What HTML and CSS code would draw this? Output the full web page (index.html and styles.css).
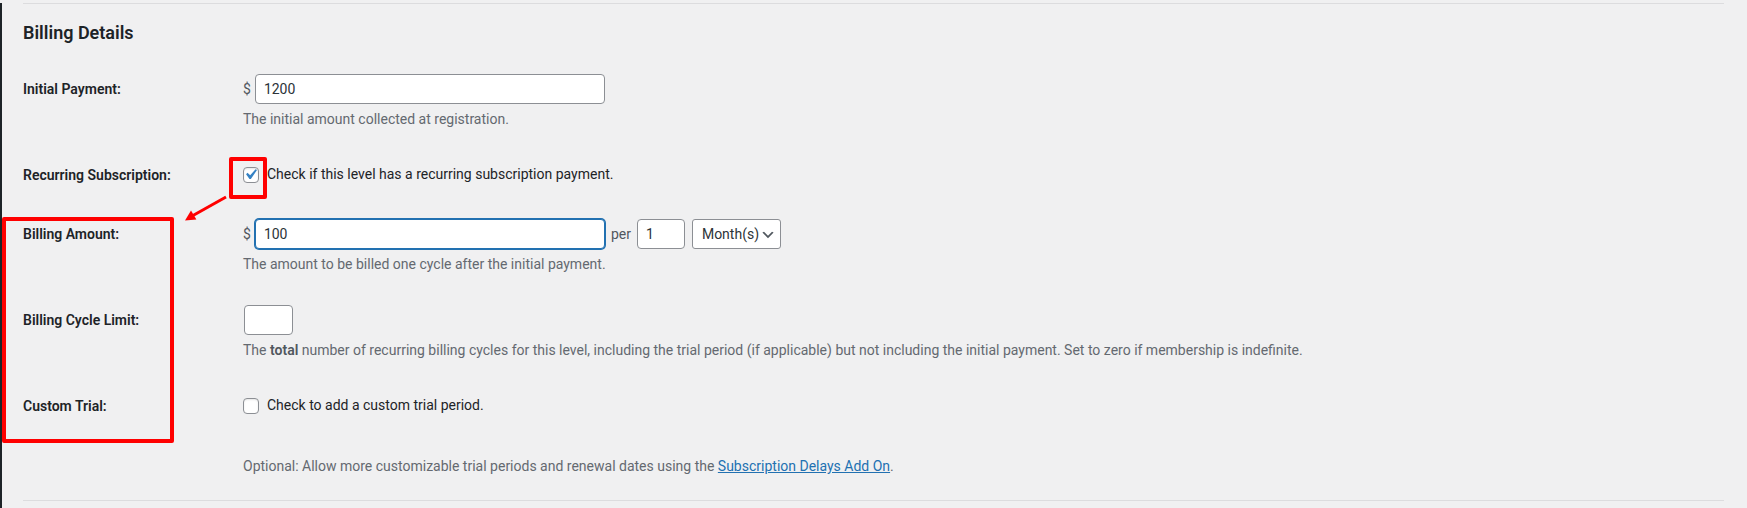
FILE: index.html
```html
<!DOCTYPE html>
<html lang="en">
<head>
    <meta charset="UTF-8">
    <meta name="viewport" content="width=device-width, initial-scale=1.0">
    <title>Edit Membership Level</title>
<link rel="stylesheet" href="styles.css">
</head>
<body>
    <div class="screen">
        <section class="billing">
            <hr class="rule">
            <h2 class="section-title">Billing Details</h2>

            <div class="form-row">
                <div class="row-label">Initial Payment:</div>
                <div class="row-field">
                    <div class="field-line">
                        <span class="currency">$</span>
                        <input type="text" class="text-input input-wide" value="1200">
                    </div>
                    <p class="description">The initial amount collected at registration.</p>
                </div>
            </div>

            <div class="form-row">
                <div class="row-label">Recurring Subscription:</div>
                <div class="row-field">
                    <label class="check-line">
                        <span class="check-box">
                            <input type="checkbox" checked>
                            <svg class="check-mark" viewBox="0 0 20 20" width="21" height="21"><path d="M14.83 4.89l1.34.94-5.81 8.38H9.02L5.78 9.67l1.34-1.25 2.57 2.4z" fill="#3582c4"/></svg>
                        </span>
                        Check if this level has a recurring subscription payment.
                    </label>
                </div>
            </div>

            <div class="form-row">
                <div class="row-label">Billing Amount:</div>
                <div class="row-field">
                    <div class="field-line">
                        <span class="currency">$</span>
                        <input type="text" class="text-input input-wide is-focused" value="100">
                        <span class="per">per</span>
                        <input type="text" class="text-input input-small" value="1">
                        <span class="select-wrap">
                            <select class="select-input">
                                <option>Day(s)</option>
                                <option>Week(s)</option>
                                <option selected>Month(s)</option>
                                <option>Year(s)</option>
                            </select>
                            <svg class="select-arrow" viewBox="0 0 20 20" width="16" height="16"><path d="M5 6l5 5 5-5 2 1-7 7-7-7 2-1z" fill="#50575e"/></svg>
                        </span>
                    </div>
                    <p class="description">The amount to be billed one cycle after the initial payment.</p>
                </div>
            </div>

            <div class="form-row">
                <div class="row-label">Billing Cycle Limit:</div>
                <div class="row-field">
                    <div class="field-line">
                        <input type="text" class="text-input input-limit" value="">
                    </div>
                    <p class="description">The <strong>total</strong> number of recurring billing cycles for this level, including the trial period (if applicable) but not including the initial payment. Set to zero if membership is indefinite.</p>
                </div>
            </div>

            <div class="form-row">
                <div class="row-label">Custom Trial:</div>
                <div class="row-field">
                    <label class="check-line">
                        <span class="check-box"><input type="checkbox"></span>
                        Check to add a custom trial period.
                    </label>
                </div>
            </div>

            <div class="form-row">
                <div class="row-label"></div>
                <div class="row-field note-field">
                    <p class="description">Optional: Allow more customizable trial periods and renewal dates using the <a href="#">Subscription Delays Add On</a>.</p>
                </div>
            </div>

            <hr class="rule rule-bottom">
        </section>
    </div>

    <!-- screenshot annotations -->
    <div class="mark mark-check"></div>
    <div class="mark mark-fields"></div>
    <svg class="mark-arrow" viewBox="180 190 50 35" width="50" height="35">
        <line x1="226" y1="197" x2="193" y2="215.5" stroke="#ff0000" stroke-width="3"/>
        <polygon points="185,220.5 196.4,219.6 191,210.6" fill="#ff0000"/>
    </svg>
</body>
</html>
```
FILE: styles.css
```css
body {
    margin: 0;
    background-color: #f0f0f1;
    color: #1d2327;
    font-family: Roboto, "Liberation Sans", sans-serif;
    font-size: 14px;
    line-height: 18px;
}

.screen {
    min-height: 508px;
    border-left: 2px solid #1d2327;
    padding: 0 23px 0 21px;
    box-sizing: border-box;
}

.rule {
    margin: 3px 0 0;
    border: none;
    border-top: 1px solid #dcdcde;
}

.rule-bottom {
    margin-top: 23px;
}

.section-title {
    font-size: 18px;
    font-weight: 600;
    line-height: 23px;
    margin: 17px 0 15px;
}

.form-row {
    display: grid;
    grid-template-columns: 220px 1fr;
}

.row-label {
    font-weight: 600;
    padding: 21px 0 20px;
}

.row-field {
    padding: 15px 0;
}

.note-field {
    padding-top: 16px;
    padding-bottom: 0;
}

.field-line {
    display: flex;
    align-items: center;
    height: 30px;
}

.currency {
    margin-right: 4px;
    color: #50575e;
}

.text-input,
.select-input {
    font: inherit;
    color: #2c3338;
    height: 30px;
    box-sizing: border-box;
    border: 1px solid #8c8f94;
    border-radius: 4px;
    background-color: #fff;
    padding: 0 8px;
    margin: 0;
    outline: none;
}

.input-wide {
    width: 350px;
}

.input-small {
    width: 48px;
}

.input-limit {
    width: 49px;
    margin-left: 1px;
}

.is-focused {
    border-color: #2271b1;
    box-shadow: 0 0 0 1px #2271b1;
}

.per {
    margin: 0 6px;
    color: #50575e;
}

.select-wrap {
    position: relative;
    margin-left: 7px;
}

.select-input {
    appearance: none;
    width: 89px;
    padding: 0 16px 0 9px;
    border-radius: 3px;
}

.select-arrow {
    position: absolute;
    right: 5px;
    top: 8px;
    pointer-events: none;
}

.description {
    margin: 6px 0 2px;
    color: #646970;
}

.description strong {
    font-weight: 600;
    color: #50575e;
}

.description a {
    color: #2271b1;
}

.check-line {
    display: flex;
    align-items: flex-start;
    gap: 8px;
    padding-top: 5px;
}

.check-box {
    position: relative;
    width: 16px;
    height: 16px;
    margin-top: 2px;
}

.check-box input {
    appearance: none;
    display: block;
    width: 16px;
    height: 16px;
    margin: 0;
    box-sizing: border-box;
    border: 1px solid #8c8f94;
    border-radius: 4px;
    background-color: #fff;
    box-shadow: inset 0 1px 2px rgba(0, 0, 0, 0.1);
}

.check-mark {
    position: absolute;
    left: -3px;
    top: -3px;
    pointer-events: none;
}

.mark {
    position: absolute;
    border: 4px solid #ff0000;
    border-radius: 2px;
    box-sizing: border-box;
}

.mark-check {
    left: 229px;
    top: 157px;
    width: 38px;
    height: 42px;
}

.mark-fields {
    left: 2px;
    top: 217px;
    width: 172px;
    height: 226px;
}

.mark-arrow {
    position: absolute;
    left: 180px;
    top: 190px;
}
```
